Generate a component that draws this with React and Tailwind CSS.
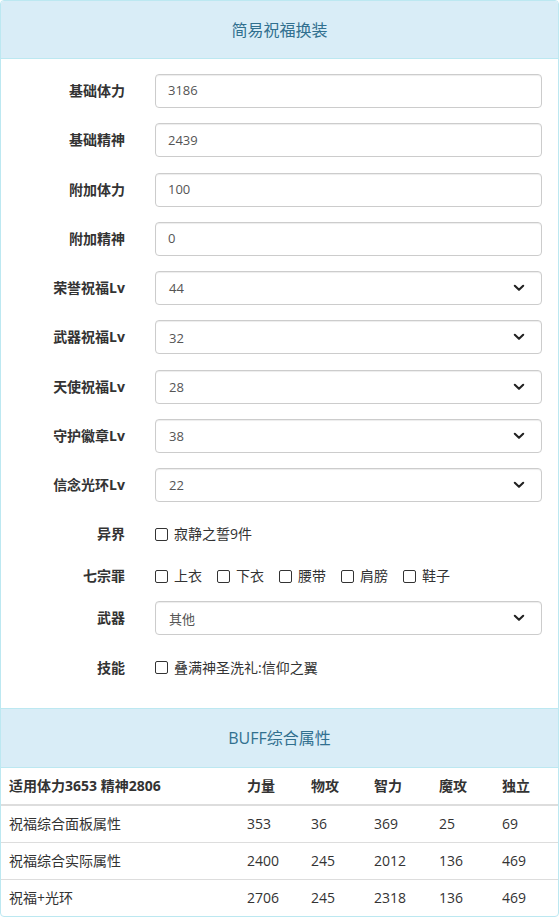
import React from "react";

const FONT = { fontFamily: '"Open Sans", "Noto Sans CJK SC", sans-serif' };

function Chevron() {
  return (
    <svg width="12" height="8" viewBox="0 0 12 8" className="shrink-0">
      <path d="M1.8 1.8 L6 5.8 L10.2 1.8" fill="none" stroke="#222" strokeWidth="2.1" strokeLinecap="round" strokeLinejoin="round" />
    </svg>
  );
}

function Row({ label, children, check }) {
  return (
    <div className={`flex ${check ? "h-[27px] mb-[15px]" : "h-[34px] mb-[15.25px]"}`}>
      <div className={`w-[139px] shrink-0 pr-[15px] text-right font-bold text-[14px] text-[#333] ${check ? "pt-[7px] leading-[20px]" : "leading-[34px]"}`}>
        {label}
      </div>
      <div className="flex-1 pl-[15px] pr-[16px] min-w-0">{children}</div>
    </div>
  );
}

function Input({ value }) {
  return (
    <div className="h-[34px] border border-[#ccc] rounded-[4px] px-[12px] flex items-center text-[13px] text-[#555] shadow-[inset_0_1px_1px_rgba(0,0,0,0.075)]">
      {value}
    </div>
  );
}

function Select({ value }) {
  return (
    <div className="h-[34px] border border-[#ccc] rounded-[4px] pl-[13px] pr-[16px] flex items-center justify-between text-[13px] text-[#555] shadow-[inset_0_1px_1px_rgba(0,0,0,0.075)]">
      <span className="pt-[2px]">{value}</span>
      <Chevron />
    </div>
  );
}

function Box() {
  return <span className="inline-block w-[13px] h-[13px] border border-[#333] rounded-[2px] bg-white shrink-0" />;
}

function Check({ text, className = "" }) {
  return (
    <span className={`inline-flex items-center gap-[6px] text-[14px] text-[#333] whitespace-nowrap ${className}`}>
      <Box />
      <span>{text}</span>
    </span>
  );
}

export default function App() {
  const rows = [
    ["祝福综合面板属性", "353", "36", "369", "25", "69"],
    ["祝福综合实际属性", "2400", "245", "2012", "136", "469"],
    ["祝福+光环", "2706", "245", "2318", "136", "469"],
  ];
  return (
    <div style={FONT} className="w-[559px] bg-white">
      <div className="border border-[#bce8f1] rounded-[4px] overflow-hidden">
        <div className="h-[58px] bg-[#d9edf7] border-b border-[#bce8f1] flex items-center justify-center text-[16px] text-[#31708f]">
          简易祝福换装
        </div>
        <div className="pt-[15px] pb-[15px]">
          <Row label="基础体力"><Input value="3186" /></Row>
          <Row label="基础精神"><Input value="2439" /></Row>
          <Row label="附加体力"><Input value="100" /></Row>
          <Row label="附加精神"><Input value="0" /></Row>
          <Row label="荣誉祝福Lv"><Select value="44" /></Row>
          <Row label="武器祝福Lv"><Select value="32" /></Row>
          <Row label="天使祝福Lv"><Select value="28" /></Row>
          <Row label="守护徽章Lv"><Select value="38" /></Row>
          <Row label="信念光环Lv"><Select value="22" /></Row>
          <Row label="异界" check>
            <div className="pt-[7px] leading-[20px] flex">
              <Check text="寂静之誓9件" />
            </div>
          </Row>
          <Row label="七宗罪" check>
            <div className="pt-[7px] leading-[20px] flex gap-[15px]">
              <Check text="上衣" className="w-[47px]" />
              <Check text="下衣" className="w-[47px]" />
              <Check text="腰带" className="w-[47px]" />
              <Check text="肩膀" className="w-[47px]" />
              <Check text="鞋子" className="w-[47px]" />
            </div>
          </Row>
          <Row label="武器"><Select value="其他" /></Row>
          <div className="flex h-[27px] mb-[15px]">
            <div className="w-[139px] shrink-0 pr-[15px] text-right font-bold text-[14px] text-[#333] pt-[7px] leading-[20px]">技能</div>
            <div className="flex-1 pl-[15px] pt-[7px] leading-[20px] flex">
              <Check text="叠满神圣洗礼:信仰之翼" />
            </div>
          </div>
        </div>
        <div className="h-[60px] bg-[#d9edf7] border-y border-[#bce8f1] flex items-center justify-center text-[16px] text-[#31708f]">
          BUFF综合属性
        </div>
        <table className="w-full text-[14px] text-[#333] border-collapse">
          <colgroup>
            <col className="w-[238px]" />
            <col className="w-[64px]" />
            <col className="w-[63px]" />
            <col className="w-[65px]" />
            <col className="w-[63px]" />
            <col />
          </colgroup>
          <thead>
            <tr className="border-b-2 border-[#ddd]">
              {["适用体力3653 精神2806", "力量", "物攻", "智力", "魔攻", "独立"].map((h) => (
                <th key={h} className="text-left font-bold px-[8px] py-[8px] leading-[20px] whitespace-nowrap">{h}</th>
              ))}
            </tr>
          </thead>
          <tbody>
            {rows.map((r, i) => (
              <tr key={i} className={i < rows.length - 1 ? "border-b border-[#ddd]" : ""}>
                {r.map((c, j) => (
                  <td key={j} className="px-[8px] py-[8px] leading-[20px] whitespace-nowrap">{c}</td>
                ))}
              </tr>
            ))}
          </tbody>
        </table>
      </div>
    </div>
  );
}
